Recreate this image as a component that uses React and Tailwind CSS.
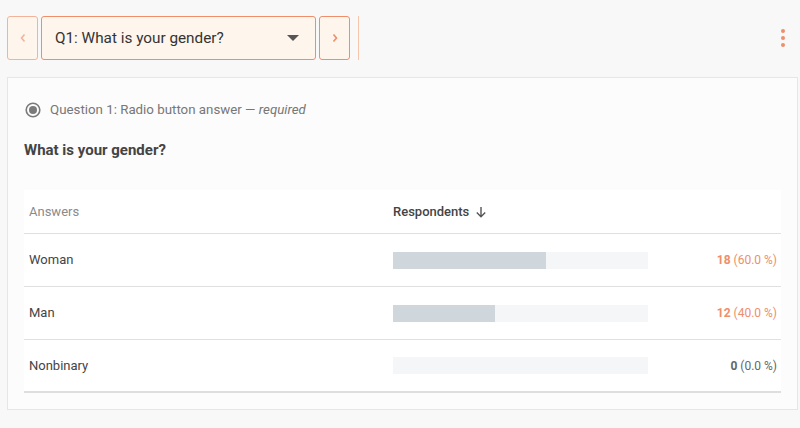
import React from "react";

const rows = [
  { label: "Woman", count: 18, pct: 60 },
  { label: "Man", count: 12, pct: 40 },
  { label: "Nonbinary", count: 0, pct: 0 },
];

export default function App() {
  return (
    <div className="w-[800px] h-[428px] bg-[#f8f8f8] font-['Roboto',sans-serif] text-[#424242] overflow-hidden">
      {/* top bar */}
      <div className="flex items-center h-[77px] pl-[7px] pr-[15px] pb-[1px]">
        <div className="flex items-center gap-[3px] h-[44px]">
          <button className="w-[31px] h-[44px] rounded-[3px] border border-[#f3b39b] bg-[#fef5ec] flex items-center justify-center">
            <svg width="8" height="10" viewBox="0 0 8 10"><path d="M5.5 1.5 L2.5 5 L5.5 8.5" fill="none" stroke="#f4b49a" strokeWidth="1.6" /></svg>
          </button>
          <div className="w-[275px] h-[44px] rounded-[3px] border border-[#ee8e6a] bg-[#fef5ec] flex items-center pl-[13px] pr-[16px]">
            <span className="text-[15.3px] text-[#333]">Q1: What is your gender?</span>
            <svg className="ml-auto" width="12" height="6" viewBox="0 0 12 6"><path d="M0 0 L12 0 L6 6 Z" fill="#555" /></svg>
          </div>
          <button className="w-[31px] h-[44px] rounded-[3px] border border-[#ee8e6a] bg-[#fef5ec] flex items-center justify-center">
            <svg width="8" height="10" viewBox="0 0 8 10"><path d="M2.5 1.5 L5.5 5 L2.5 8.5" fill="none" stroke="#ee8e6a" strokeWidth="1.6" /></svg>
          </button>
          <div className="ml-[5px] w-[1px] h-[44px] bg-[#f7c4ae]" />
        </div>
        <div className="ml-auto flex flex-col gap-[3px] items-center">
          <span className="w-[4px] h-[4px] rounded-full bg-[#ee8e6a]" />
          <span className="w-[4px] h-[4px] rounded-full bg-[#ee8e6a]" />
          <span className="w-[4px] h-[4px] rounded-full bg-[#ee8e6a]" />
        </div>
      </div>

      {/* card */}
      <div className="ml-[7px] w-[791px] h-[333px] border border-[#e6e6e6] bg-[#fcfcfc] px-[16px]">
        <div className="flex items-center h-[60px] pt-[3px]">
          <svg className="ml-[1px]" width="16" height="16" viewBox="0 0 16 16">
            <circle cx="8" cy="8" r="6.8" fill="none" stroke="#7a7a7a" strokeWidth="1.6" />
            <circle cx="8" cy="8" r="4" fill="#7a7a7a" />
          </svg>
          <span className="ml-[9px] text-[13.3px] text-[#777]">
            Question 1: Radio button answer — <i>required</i>
          </span>
        </div>
        <div className="text-[15px] font-bold text-[#444] leading-[20px] h-[20px] mt-[2px]">What is your gender?</div>

        <div className="mt-[30px] bg-white">
          <div className="flex items-center h-[44px] border-b border-[#e0e0e0] text-[13px]">
            <div className="w-[369px] pl-[5px] text-[#8a8a8a]">Answers</div>
            <div className="flex items-center gap-[6px] text-[#444] font-medium">
              Respondents
              <svg width="12" height="12" viewBox="0 0 12 12"><path d="M6 1 V10.5 M1.8 6.5 L6 10.7 L10.2 6.5" fill="none" stroke="#555" strokeWidth="1.4" /></svg>
            </div>
          </div>
          {rows.map((r, i) => (
            <div
              key={r.label}
              className={`flex items-center h-[53px] ${i === rows.length - 1 ? "border-b-2 border-[#dedede]" : "border-b border-[#e0e0e0]"}`}
            >
              <div className="w-[369px] pl-[5px] text-[13px] text-[#444]">{r.label}</div>
              <div className="w-[255px] h-[17px] bg-[#f5f6f8]">
                <div className="h-full bg-[#cfd7dd]" style={{ width: `${r.pct}%` }} />
              </div>
              <div className={`ml-auto pr-[4px] text-[12px] ${r.count ? "text-[#ee8e6a]" : "text-[#666]"}`}>
                <span className="font-bold">{r.count}</span> ({r.pct.toFixed(1)} %)
              </div>
            </div>
          ))}
        </div>
      </div>
    </div>
  );
}
